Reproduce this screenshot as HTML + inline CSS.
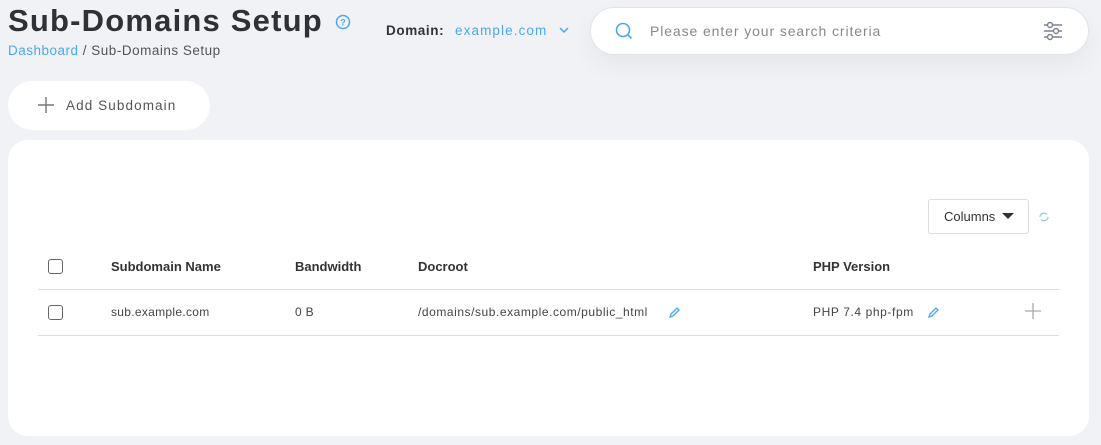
<!DOCTYPE html>
<html><head><style>
*{margin:0;padding:0;box-sizing:border-box}
body{width:1101px;height:445px;background:#f1f2f6;font-family:"Liberation Sans",sans-serif;position:relative;overflow:hidden;color:#333}
.a{position:absolute;white-space:nowrap}
h1{position:absolute;left:8px;top:3px;font-size:31px;font-weight:bold;color:#2f3136;letter-spacing:1.2px}
.cb{position:absolute;width:15px;height:15px;border:1.5px solid #666;border-radius:3px;background:#fff}
.th{font-size:13px;font-weight:bold;color:#333;top:259px}
.td{font-size:12px;color:#444;top:305px;letter-spacing:0.3px}
</style></head><body>
<h1>Sub-Domains Setup</h1>
<svg class="a" style="left:335px;top:14px" width="16" height="16" viewBox="0 0 16 16"><circle cx="8" cy="8" r="6.5" fill="none" stroke="#4aa8f0" stroke-width="1.5"/><text x="8" y="11.5" font-size="9" font-weight="bold" text-anchor="middle" fill="#4aa8f0" font-family="Liberation Sans">?</text></svg>
<div class="a" style="left:8px;top:43px;font-size:13.5px;color:#555;letter-spacing:0.5px"><span style="color:#4aa8f0">Dashboard</span> / Sub-Domains Setup</div>
<div class="a" style="left:386px;top:23px;font-size:13.5px;font-weight:bold;color:#333;letter-spacing:0.6px">Domain:</div>
<div class="a" style="left:455px;top:23px;font-size:13.5px;color:#4aa8f0;letter-spacing:1.1px">example.com</div>
<svg class="a" style="left:558px;top:26px" width="12" height="8"><path d="M2 2l4 4 4-4" fill="none" stroke="#4aa8f0" stroke-width="1.5"/></svg>
<div class="a" style="left:590px;top:7px;width:499px;height:48px;background:#fff;border:1px solid #e2e4ea;border-radius:24px;box-shadow:0 10px 25px rgba(0,0,0,0.05)"></div>
<svg class="a" style="left:614px;top:21px" width="20" height="20"><circle cx="9" cy="9" r="6.5" fill="none" stroke="#4aa8f0" stroke-width="1.6"/><path d="M13.5 13.5l4 4" stroke="#4aa8f0" stroke-width="1.6"/></svg>
<div class="a" style="left:650px;top:23px;font-size:14px;color:#888;letter-spacing:0.9px">Please enter your search criteria</div>
<svg class="a" style="left:1042px;top:20px" width="22" height="22" stroke="#7a8290" stroke-width="1.4" fill="none"><path d="M2 5h18M2 11h18M2 17h18"/><circle cx="8" cy="5" r="2.5" fill="#fff"/><circle cx="14" cy="11" r="2.5" fill="#fff"/><circle cx="8" cy="17" r="2.5" fill="#fff"/></svg>
<div class="a" style="left:8px;top:81px;width:202px;height:49px;background:#fff;border-radius:25px"></div>
<svg class="a" style="left:37px;top:96px" width="18" height="18"><path d="M9 1v16M1 9h16" stroke="#777" stroke-width="1.4"/></svg>
<div class="a" style="left:66px;top:98px;font-size:13.5px;color:#555;letter-spacing:1.1px">Add Subdomain</div>
<div class="a" style="left:8px;top:140px;width:1081px;height:296px;background:#fff;border-radius:20px"></div>
<div class="a" style="left:928px;top:199px;width:101px;height:35px;border:1px solid #ddd;border-radius:3px;background:#fff"></div>
<div class="a" style="left:944px;top:209px;font-size:13px;color:#333">Columns</div>
<svg class="a" style="left:1002px;top:212px" width="12" height="8"><path d="M0 1h12L6 7z" fill="#333"/></svg>
<svg class="a" style="left:1038px;top:211px" width="12" height="12" fill="none" stroke="#8cc8f5" stroke-width="1.2"><path d="M2 6a4 4 0 0 1 7-2.5M10 6a4 4 0 0 1-7 2.5"/></svg>
<div class="cb" style="left:48px;top:259px"></div>
<div class="a th" style="left:111px">Subdomain Name</div>
<div class="a th" style="left:295px">Bandwidth</div>
<div class="a th" style="left:418px">Docroot</div>
<div class="a th" style="left:813px">PHP Version</div>
<div class="a" style="left:38px;top:289px;width:1021px;height:1px;background:#ddd"></div>
<div class="cb" style="left:48px;top:305px"></div>
<div class="a td" style="left:111px">sub.example.com</div>
<div class="a td" style="left:295px">0 B</div>
<div class="a td" style="left:418px;letter-spacing:0.55px">/domains/sub.example.com/public_html</div>
<svg class="a" style="left:667px;top:305px" width="14" height="14"><path d="M3 12l1-3 6-6 2 2-6 6z" fill="none" stroke="#4aa8f0" stroke-width="1.3"/></svg>
<div class="a td" style="left:813px;letter-spacing:0.6px">PHP 7.4 php-fpm</div>
<svg class="a" style="left:926px;top:305px" width="14" height="14"><path d="M3 12l1-3 6-6 2 2-6 6z" fill="none" stroke="#4aa8f0" stroke-width="1.3"/></svg>
<svg class="a" style="left:1024px;top:302px" width="18" height="18"><path d="M9 1v16M1 9h16" stroke="#aaa" stroke-width="1.3"/></svg>
<div class="a" style="left:38px;top:335px;width:1021px;height:1px;background:#ddd"></div>
</body></html>
